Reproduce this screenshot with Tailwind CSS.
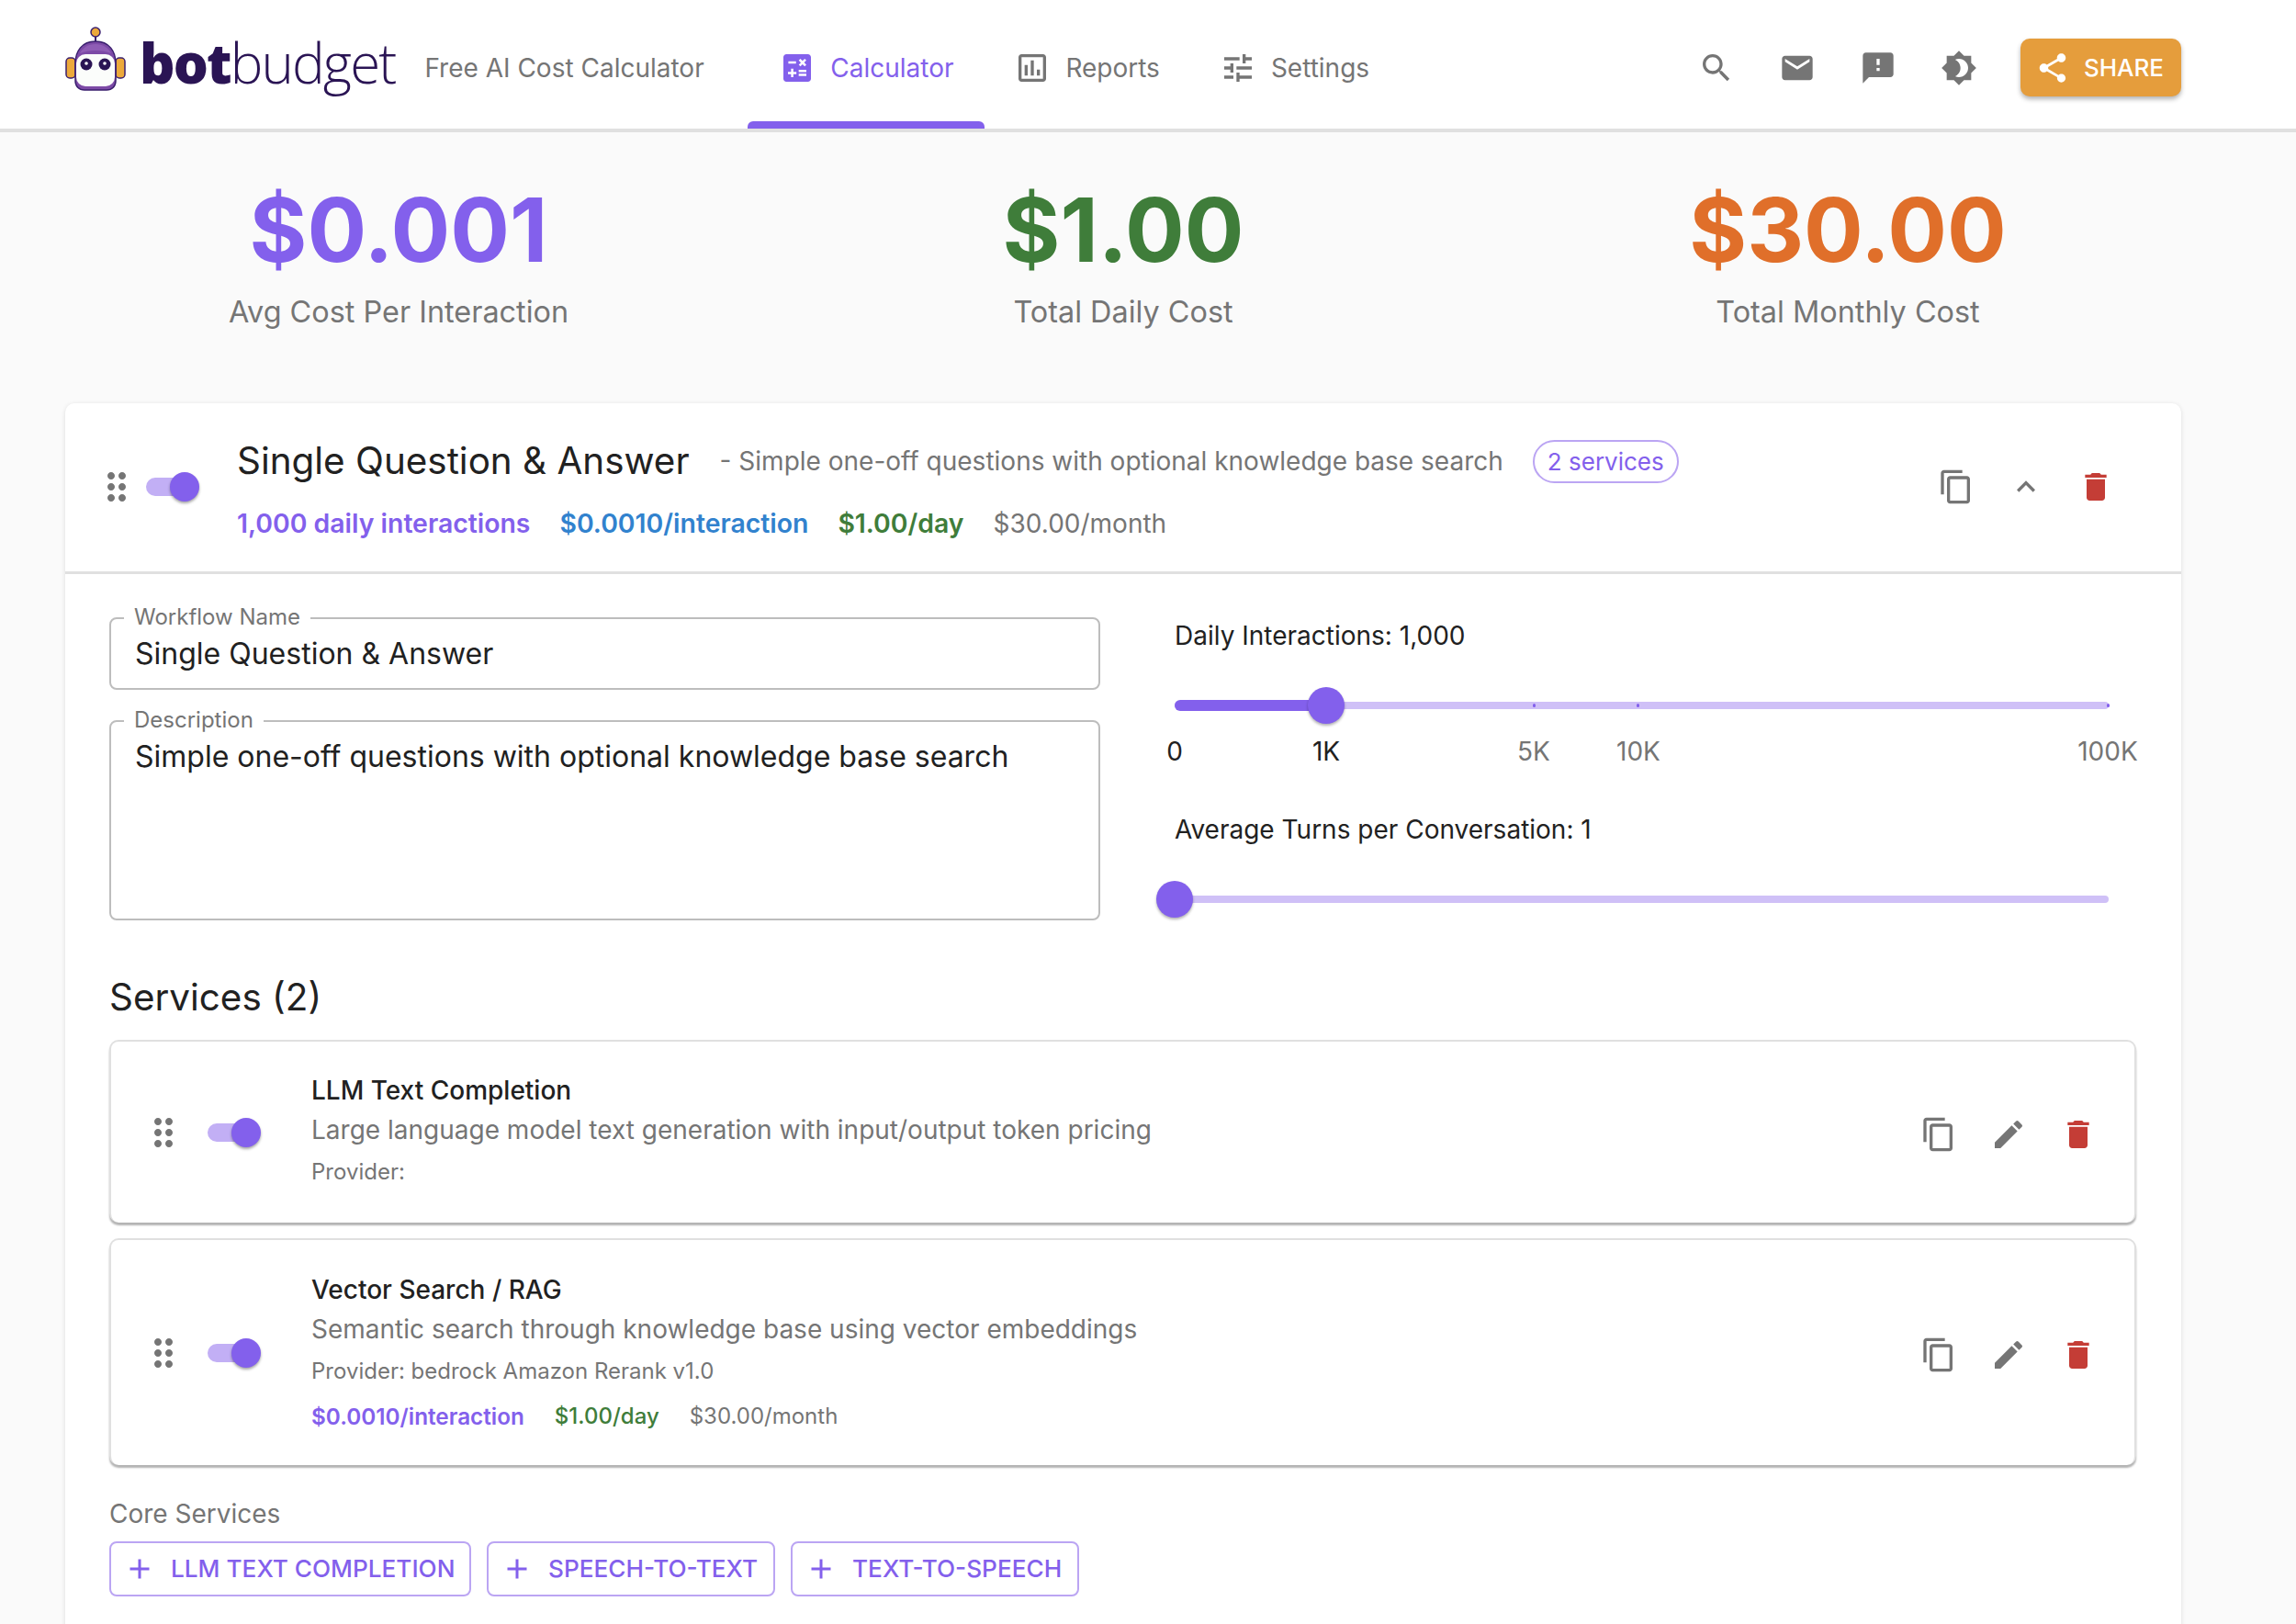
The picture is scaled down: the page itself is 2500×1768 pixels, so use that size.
<!DOCTYPE html>
<html lang="en">

<head>
    <meta charset="UTF-8">
    <title>BotBudget - Free AI Cost Calculator</title>
    <script src="https://cdn.jsdelivr.net/npm/@tailwindcss/browser@4"></script>
</head>

<body class="h-screen overflow-hidden bg-[#fafafa] text-[#212121] font-[family-name:Inter,sans-serif]">
    <!-- icon set -->
    <svg class="hidden">
        <symbol id="i-calc" viewBox="0 0 24 24"><path d="M19 3H5c-1.1 0-2 .9-2 2v14c0 1.1.9 2 2 2h14c1.1 0 2-.9 2-2V5c0-1.1-.9-2-2-2zm-5.97 4.06L14.09 6l1.41 1.41L16.91 6l1.06 1.06-1.41 1.41 1.41 1.41-1.06 1.06-1.41-1.4-1.41 1.41-1.06-1.06 1.41-1.41-1.41-1.42zm-6.78.66h5v1.5h-5v-1.5zM11.5 16h-2v2H8v-2H6v-1.5h2v-2h1.5v2h2V16zm6.5 1.25h-5v-1.5h5v1.5zm0-2.5h-5v-1.5h5v1.5z"/></symbol>
        <symbol id="i-report" viewBox="0 0 24 24"><path d="M19 3H5c-1.1 0-2 .9-2 2v14c0 1.1.9 2 2 2h14c1.1 0 2-.9 2-2V5c0-1.1-.9-2-2-2zm0 16H5V5h14v14zM7 10h2v7H7zm4-3h2v10h-2zm4 6h2v4h-2z"/></symbol>
        <symbol id="i-tune" viewBox="0 0 24 24"><path d="M3 17v2h6v-2H3zM3 5v2h10V5H3zm10 16v-2h8v-2h-8v-2h-2v6h2zM7 9v2H3v2h4v2h2V9H7zm14 4v-2H11v2h10zm-6-4h2V7h4V5h-4V3h-2v6z"/></symbol>
        <symbol id="i-search" viewBox="0 0 24 24"><path d="M15.5 14h-.79l-.28-.27C15.41 12.59 16 11.11 16 9.5 16 5.91 13.09 3 9.5 3S3 5.91 3 9.5 5.91 16 9.5 16c1.61 0 3.09-.59 4.23-1.57l.27.28v.79l5 4.99L20.49 19l-4.99-5zm-6 0C7.01 14 5 11.99 5 9.5S7.01 5 9.5 5 14 7.01 14 9.5 11.99 14 9.5 14z"/></symbol>
        <symbol id="i-mail" viewBox="0 0 24 24"><path d="M20 4H4c-1.1 0-1.99.9-1.99 2L2 18c0 1.1.9 2 2 2h16c1.1 0 2-.9 2-2V6c0-1.1-.9-2-2-2zm0 4l-8 5-8-5V6l8 5 8-5v2z"/></symbol>
        <symbol id="i-feedback" viewBox="0 0 24 24"><path d="M20 2H4c-1.1 0-1.99.9-1.99 2L2 22l4-4h14c1.1 0 2-.9 2-2V4c0-1.1-.9-2-2-2zm-7 12h-2v-2h2v2zm0-4h-2V6h2v4z"/></symbol>
        <symbol id="i-theme" viewBox="0 0 24 24"><path d="M20 8.69V4h-4.69L12 .69 8.69 4H4v4.69L.69 12 4 15.31V20h4.69L12 23.31 15.31 20H20v-4.69L23.31 12 20 8.69zM12 18c-.89 0-1.74-.2-2.5-.55C11.56 16.5 13 14.42 13 12s-1.44-4.5-3.5-5.45C10.26 6.2 11.11 6 12 6c3.31 0 6 2.69 6 6s-2.69 6-6 6z"/></symbol>
        <symbol id="i-share" viewBox="0 0 24 24"><path d="M18 16.08c-.76 0-1.44.3-1.96.77L8.91 12.7c.05-.23.09-.46.09-.7s-.04-.47-.09-.7l7.05-4.11c.54.5 1.25.81 2.04.81 1.66 0 3-1.34 3-3s-1.34-3-3-3-3 1.34-3 3c0 .24.04.47.09.7L8.04 9.81C7.5 9.31 6.79 9 6 9c-1.66 0-3 1.34-3 3s1.34 3 3 3c.79 0 1.5-.31 2.04-.81l7.12 4.16c-.05.21-.08.43-.08.65 0 1.61 1.31 2.92 2.92 2.92 1.61 0 2.92-1.31 2.92-2.92s-1.31-2.92-2.92-2.92z"/></symbol>
        <symbol id="i-drag" viewBox="0 0 24 24"><path d="M11 18c0 1.1-.9 2-2 2s-2-.9-2-2 .9-2 2-2 2 .9 2 2zm-2-8c-1.1 0-2 .9-2 2s.9 2 2 2 2-.9 2-2-.9-2-2-2zm0-6c-1.1 0-2 .9-2 2s.9 2 2 2 2-.9 2-2-.9-2-2-2zm6 4c1.1 0 2-.9 2-2s-.9-2-2-2-2 .9-2 2 .9 2 2 2zm0 2c-1.1 0-2 .9-2 2s.9 2 2 2 2-.9 2-2-.9-2-2-2zm0 6c-1.1 0-2 .9-2 2s.9 2 2 2 2-.9 2-2-.9-2-2-2z"/></symbol>
        <symbol id="i-copy" viewBox="0 0 24 24"><path d="M16 1H4c-1.1 0-2 .9-2 2v14h2V3h12V1zm3 4H8c-1.1 0-2 .9-2 2v14c0 1.1.9 2 2 2h11c1.1 0 2-.9 2-2V7c0-1.1-.9-2-2-2zm0 16H8V7h11v14z"/></symbol>
        <symbol id="i-less" viewBox="0 0 24 24"><path d="M12 8l-6 6 1.41 1.41L12 10.83l4.59 4.58L18 14z"/></symbol>
        <symbol id="i-delete" viewBox="0 0 24 24"><path d="M6 19c0 1.1.9 2 2 2h8c1.1 0 2-.9 2-2V7H6v12zM19 4h-3.5l-1-1h-5l-1 1H5v2h14V4z"/></symbol>
        <symbol id="i-edit" viewBox="0 0 24 24"><path d="M3 17.25V21h3.75L17.81 9.94l-3.75-3.75L3 17.25zM20.71 7.04c.39-.39.39-1.02 0-1.41l-2.34-2.34a.9959.9959 0 0 0-1.41 0l-1.83 1.83 3.75 3.75 1.83-1.83z"/></symbol>
        <symbol id="i-add" viewBox="0 0 24 24"><path d="M19 13h-6v6h-2v-6H5v-2h6V5h2v6h6v2z"/></symbol>
    </svg>

    <!-- Top bar -->
    <header class="h-[144px] bg-white border-b-4 border-[#e0e0e0] pt-[7px] pl-[71px] pr-[125px] flex items-center">
        <svg class="w-[66px] h-[71px] mt-[-21px]" viewBox="0 0 66 71">
            <circle cx="33" cy="7" r="5" fill="#eca93b" stroke="#3a1f6e" stroke-width="1.5" />
            <rect x="32" y="12" width="2" height="7" fill="#3a1f6e" />
            <rect x="1" y="35" width="10" height="22" rx="4" fill="#eca93b" stroke="#3a1f6e" stroke-width="1.5" />
            <rect x="55" y="35" width="10" height="22" rx="4" fill="#eca93b" stroke="#3a1f6e" stroke-width="1.5" />
            <path d="M33 17c-15 0-22 11-22 24v19c0 6 4 10 10 10h24c6 0 10-4 10-10V41c0-13-7-24-22-24z" fill="#7c4aa6" stroke="#3a1f6e" stroke-width="1.5" />
            <path d="M16 30c3-6 9-10 17-10s14 4 17 10c-5-2-11-3-17-3s-12 1-17 3z" fill="#8f5db5" />
            <rect x="12" y="31" width="42" height="35" rx="10" fill="#fbfdfb" />
            <circle cx="23" cy="42" r="6.5" fill="#2a1454" />
            <circle cx="43" cy="42" r="6.5" fill="#2a1454" />
            <circle cx="23" cy="41" r="1.8" fill="#fff" />
            <circle cx="43" cy="41" r="1.8" fill="#fff" />
        </svg>
        <div class="ml-[15px] mt-[-11px] text-[60px] leading-none tracking-[-1.9px] text-[#2a1454] font-[family-name:'Open_Sans',sans-serif] font-light"><span class="font-extrabold">bot</span>budget</div>
        <div class="ml-[32px] w-[304px] text-[28px] text-[#757575] whitespace-nowrap">Free AI Cost Calculator</div>

        <nav class="ml-[48px] mt-[-7px] flex self-stretch text-[28px]">
            <div class="relative w-[258px] pt-[7px] flex items-center justify-center gap-[16px] text-[#8360ec]">
                <svg class="w-[40px] h-[40px] fill-current"><use href="#i-calc" /></svg>
                <span>Calculator</span>
                <div class="absolute left-0 right-0 bottom-0 h-[8px] rounded-t-[6px] bg-[#8360ec]"></div>
            </div>
            <div class="ml-[32px] pt-[7px] flex items-center gap-[16px] text-[#757575]">
                <svg class="w-[40px] h-[40px] fill-current"><use href="#i-report" /></svg>
                <span>Reports</span>
            </div>
            <div class="ml-[65px] pt-[7px] flex items-center gap-[16px] text-[#757575]">
                <svg class="w-[40px] h-[40px] fill-current"><use href="#i-tune" /></svg>
                <span>Settings</span>
            </div>
        </nav>

        <div class="ml-auto flex items-center text-[#757575]">
            <div class="flex gap-[48px] mr-[47px]">
                <svg class="w-[40px] h-[40px] fill-current"><use href="#i-search" /></svg>
                <svg class="w-[40px] h-[40px] fill-current"><use href="#i-mail" /></svg>
                <svg class="w-[40px] h-[40px] fill-current"><use href="#i-feedback" /></svg>
                <svg class="w-[40px] h-[40px] fill-current"><use href="#i-theme" /></svg>
            </div>
            <button class="w-[175px] h-[63px] pl-[3px] rounded-[10px] bg-[#e59d3c] text-white text-[26px] font-medium flex items-center justify-center gap-[15px] shadow-[0_3px_5px_rgba(0,0,0,0.3)]">
                <svg class="w-[38px] h-[38px] fill-current ml-[-6px]"><use href="#i-share" /></svg>
                SHARE
            </button>
        </div>
    </header>

    <main class="px-[71px] pr-[125px]">
        <!-- Totals -->
        <section class="h-[295px] grid grid-cols-3 gap-[63px] text-center">
            <div class="pt-[47px]">
                <div class="text-[96px] leading-[118px] font-bold text-[#8360ec]">$0.001</div>
                <div class="text-[32.4px] leading-[48px] mt-[7px] text-[#757575]">Avg Cost Per Interaction</div>
            </div>
            <div class="pt-[47px]">
                <div class="text-[96px] leading-[118px] font-bold text-[#3f7d3a]">$1.00</div>
                <div class="text-[32.4px] leading-[48px] mt-[7px] text-[#757575]">Total Daily Cost</div>
            </div>
            <div class="pt-[47px]">
                <div class="text-[96px] leading-[118px] font-bold text-[#e06f2a]">$30.00</div>
                <div class="text-[32.4px] leading-[48px] mt-[7px] text-[#757575]">Total Monthly Cost</div>
            </div>
        </section>

        <!-- Workflow card -->
        <section class="bg-white rounded-t-[10px] shadow-[0_1px_5px_rgba(0,0,0,0.12)] h-[1400px]">
            <div class="h-[186px] border-b-[3px] border-[#e0e0e0] pl-[32px] pr-[73px] flex items-center">
                <svg class="w-[48px] h-[48px] fill-[#757575] mt-[-1px]"><use href="#i-drag" /></svg>
                <div class="relative ml-[8px] w-[58px] h-[32px] mt-[-2px]">
                    <div class="absolute left-0 top-[6px] w-[52px] h-[20px] rounded-full bg-[#c2aff5]"></div>
                    <div class="absolute right-0 top-0 w-[32px] h-[32px] rounded-full bg-[#8360ec] shadow-[0_2px_3px_rgba(0,0,0,0.35)]"></div>
                </div>
                <div class="ml-[41px] flex-1 mt-[7px]">
                    <div class="flex items-center h-[48px]">
                        <span class="text-[40.4px] leading-[48px] whitespace-nowrap">Single Question &amp; Answer</span>
                        <span class="ml-[33px] text-[28px] text-[#757575] whitespace-nowrap">- Simple one-off questions with optional knowledge base search</span>
                        <span class="ml-[32px] w-[159px] h-[47px] flex items-center justify-center rounded-full border-2 border-[#bba5f3] text-[26px] text-[#8360ec]">2 services</span>
                    </div>
                    <div class="flex items-center gap-[32px] mt-[24px] leading-[40px] whitespace-nowrap">
                        <span class="text-[28.4px] font-semibold text-[#8360ec]">1,000 daily interactions</span>
                        <span class="text-[28.4px] font-semibold text-[#3182ce]">$0.0010/interaction</span>
                        <span class="text-[28.4px] font-semibold text-[#3f7d3a]">$1.00/day</span>
                        <span class="text-[28px] text-[#757575]">$30.00/month</span>
                    </div>
                </div>
                <div class="flex gap-[36px] mt-[-1px]">
                    <svg class="w-[40px] h-[40px] fill-[#757575]"><use href="#i-copy" /></svg>
                    <svg class="w-[40px] h-[40px] fill-[#757575]"><use href="#i-less" /></svg>
                    <svg class="w-[40px] h-[40px] fill-[#c43d36]"><use href="#i-delete" /></svg>
                </div>
            </div>

            <div class="pl-[48px] pr-[49px] pt-[47px]">
                <div class="grid grid-cols-[1079px_1fr] gap-[81px]">
                    <div>
                        <div class="relative h-[79px] rounded-[8px] border-2 border-[#bdbdbd] pl-[26px] flex items-center text-[32px]">
                            <span class="absolute left-[14px] top-[-16px] bg-white px-[11px] text-[24px] leading-[28px] text-[#757575]">Workflow Name</span>
                            Single Question &amp; Answer
                        </div>
                        <div class="relative h-[218px] mt-[33px] rounded-[8px] border-2 border-[#bdbdbd] pl-[26px] pt-[15px] text-[32px] leading-[46px]">
                            <span class="absolute left-[14px] top-[-16px] bg-white px-[11px] text-[24px] leading-[28px] text-[#757575]">Description</span>
                            Simple one-off questions with optional knowledge base search
                        </div>
                    </div>

                    <div class="w-[1017px]">
                        <div class="text-[28px] leading-[40px]">Daily Interactions: 1,000</div>
                        <div class="relative h-[40px] mt-[36px]">
                            <div class="absolute left-0 right-0 top-[16px] h-[8px] rounded-full bg-[#cfc0f7]"></div>
                            <div class="absolute left-0 w-[165px] top-[14px] h-[12px] rounded-full bg-[#8360ec]"></div>
                            <div class="absolute left-[390px] top-[18px] w-[3px] h-[4px] rounded-full bg-[#8360ec]"></div>
                            <div class="absolute left-[503px] top-[18px] w-[3px] h-[4px] rounded-full bg-[#8360ec]"></div>
                            <div class="absolute left-[1015px] top-[18px] w-[3px] h-[4px] rounded-full bg-[#8360ec]"></div>
                            <div class="absolute left-[145px] top-0 w-[40px] h-[40px] rounded-full bg-[#8360ec] shadow-[0_2px_3px_rgba(0,0,0,0.3)]"></div>
                        </div>
                        <div class="relative h-[40px] mt-[10px] text-[28px] leading-[40px]">
                            <span class="absolute left-0 -translate-x-1/2">0</span>
                            <span class="absolute left-[165px] -translate-x-1/2">1K</span>
                            <span class="absolute left-[391px] -translate-x-1/2 text-[#757575]">5K</span>
                            <span class="absolute left-[505px] -translate-x-1/2 text-[#757575]">10K</span>
                            <span class="absolute left-[1016px] -translate-x-1/2 text-[#757575]">100K</span>
                        </div>
                        <div class="text-[28px] leading-[40px] mt-[45px]">Average Turns per Conversation: 1</div>
                        <div class="relative h-[40px] mt-[36px]">
                            <div class="absolute left-0 right-0 top-[16px] h-[8px] rounded-full bg-[#cfc0f7]"></div>
                            <div class="absolute left-[-20px] top-0 w-[40px] h-[40px] rounded-full bg-[#8360ec] shadow-[0_2px_3px_rgba(0,0,0,0.3)]"></div>
                        </div>
                    </div>
                </div>

                <h2 class="mt-[60px] text-[40.4px] leading-[48px]">Services (2)</h2>

                <!-- LLM service -->
                <div class="mt-[22px] h-[199px] rounded-[10px] border-2 border-[#e0e0e0] border-b-0 bg-white shadow-[0_3px_2px_rgba(0,0,0,0.3)] pl-[33px] pr-[41px] flex items-center">
                    <svg class="w-[48px] h-[48px] fill-[#757575]"><use href="#i-drag" /></svg>
                    <div class="relative ml-[24px] w-[58px] h-[32px]">
                        <div class="absolute left-0 top-[6px] w-[52px] h-[20px] rounded-full bg-[#c2aff5]"></div>
                        <div class="absolute right-0 top-0 w-[32px] h-[32px] rounded-full bg-[#8360ec] shadow-[0_2px_3px_rgba(0,0,0,0.35)]"></div>
                    </div>
                    <div class="ml-[55px] flex-1 mt-[1px]">
                        <div class="text-[28px] leading-[44px] font-medium">LLM Text Completion</div>
                        <div class="text-[28px] leading-[42px] text-[#757575]">Large language model text generation with input/output token pricing</div>
                        <div class="text-[24px] leading-[50px] text-[#757575]">Provider:</div>
                    </div>
                    <div class="flex gap-[36px] mt-[5px]">
                        <svg class="w-[40px] h-[40px] fill-[#757575]"><use href="#i-copy" /></svg>
                        <svg class="w-[40px] h-[40px] fill-[#757575]"><use href="#i-edit" /></svg>
                        <svg class="w-[40px] h-[40px] fill-[#c43d36]"><use href="#i-delete" /></svg>
                    </div>
                </div>

                <!-- Vector search service -->
                <div class="mt-[17px] h-[247px] rounded-[10px] border-2 border-[#e0e0e0] border-b-0 bg-white shadow-[0_3px_2px_rgba(0,0,0,0.3)] pl-[33px] pr-[41px] flex items-center">
                    <svg class="w-[48px] h-[48px] fill-[#757575]"><use href="#i-drag" /></svg>
                    <div class="relative ml-[24px] w-[58px] h-[32px]">
                        <div class="absolute left-0 top-[6px] w-[52px] h-[20px] rounded-full bg-[#c2aff5]"></div>
                        <div class="absolute right-0 top-0 w-[32px] h-[32px] rounded-full bg-[#8360ec] shadow-[0_2px_3px_rgba(0,0,0,0.35)]"></div>
                    </div>
                    <div class="ml-[55px] flex-1 mt-[2px]">
                        <div class="text-[28px] leading-[44px] font-medium">Vector Search / RAG</div>
                        <div class="text-[28px] leading-[42px] text-[#757575]">Semantic search through knowledge base using vector embeddings</div>
                        <div class="text-[24px] leading-[50px] text-[#757575]">Provider: bedrock Amazon Rerank v1.0</div>
                        <div class="flex gap-[33px] text-[24px] leading-[48px]">
                            <span class="text-[24.3px] font-semibold text-[#8360ec]">$0.0010/interaction</span>
                            <span class="font-medium text-[#3f7d3a]">$1.00/day</span>
                            <span class="text-[#757575]">$30.00/month</span>
                        </div>
                    </div>
                    <div class="flex gap-[36px] mt-[5px]">
                        <svg class="w-[40px] h-[40px] fill-[#757575]"><use href="#i-copy" /></svg>
                        <svg class="w-[40px] h-[40px] fill-[#757575]"><use href="#i-edit" /></svg>
                        <svg class="w-[40px] h-[40px] fill-[#c43d36]"><use href="#i-delete" /></svg>
                    </div>
                </div>

                <div class="mt-[35px] text-[28px] leading-[36px] text-[#757575]">Core Services</div>
                <div class="mt-[12px] flex gap-[17px] text-[26.2px] font-medium text-[#8360ec]">
                    <button class="w-[394px] h-[60px] rounded-[8px] border-2 border-[#bba5f3] pl-[13px] flex items-center gap-[16px] whitespace-nowrap">
                        <svg class="w-[36px] h-[36px] fill-current"><use href="#i-add" /></svg>
                        LLM TEXT COMPLETION
                    </button>
                    <button class="w-[314px] h-[60px] rounded-[8px] border-2 border-[#bba5f3] pl-[13px] flex items-center gap-[16px] whitespace-nowrap">
                        <svg class="w-[36px] h-[36px] fill-current"><use href="#i-add" /></svg>
                        SPEECH-TO-TEXT
                    </button>
                    <button class="w-[314px] h-[60px] rounded-[8px] border-2 border-[#bba5f3] pl-[13px] flex items-center gap-[16px] whitespace-nowrap">
                        <svg class="w-[36px] h-[36px] fill-current"><use href="#i-add" /></svg>
                        TEXT-TO-SPEECH
                    </button>
                </div>
            </div>
        </section>
    </main>
</body>

</html>
